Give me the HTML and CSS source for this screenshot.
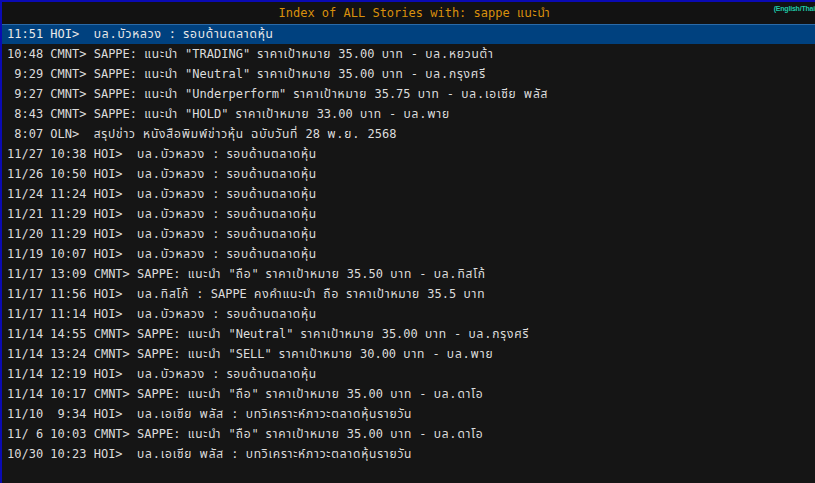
FILE: index.html
```html
<!DOCTYPE html>
<html lang="th">
<head>
<meta charset="utf-8">
<title>Index of ALL Stories</title>
<link rel="stylesheet" href="styles.css">
</head>
<body>
<div class="screen">
  <header class="titlebar">
    <h1 class="title">Index of ALL Stories with: sappe <span class="th">แนะนำ</span></h1>
    <span class="lang">(English/Thai</span>
  </header>
  <ul class="stories">
    <li class="row selected">11:51 HOI>  <span class="th">บล.บัวหลวง</span> : <span class="th">รอบด้านตลาดหุ้น</span></li>
    <li class="row">10:48 CMNT> SAPPE: <span class="th">แนะนำ</span> "TRADING" <span class="th">ราคาเป้าหมาย</span> 35.00 <span class="th">บาท</span> - <span class="th">บล.หยวนต้า</span></li>
    <li class="row"> 9:29 CMNT> SAPPE: <span class="th">แนะนำ</span> "Neutral" <span class="th">ราคาเป้าหมาย</span> 35.00 <span class="th">บาท</span> - <span class="th">บล.กรุงศรี</span></li>
    <li class="row"> 9:27 CMNT> SAPPE: <span class="th">แนะนำ</span> "Underperform" <span class="th">ราคาเป้าหมาย</span> 35.75 <span class="th">บาท</span> - <span class="th">บล.เอเซีย</span> <span class="th">พลัส</span></li>
    <li class="row"> 8:43 CMNT> SAPPE: <span class="th">แนะนำ</span> "HOLD" <span class="th">ราคาเป้าหมาย</span> 33.00 <span class="th">บาท</span> - <span class="th">บล.พาย</span></li>
    <li class="row"> 8:07 OLN>  <span class="th">สรุปข่าว</span> <span class="th">หนังสือพิมพ์ข่าวหุ้น</span> <span class="th">ฉบับวันที่</span> 28 <span class="th">พ.ย.</span> 2568</li>
    <li class="row">11/27 10:38 HOI>  <span class="th">บล.บัวหลวง</span> : <span class="th">รอบด้านตลาดหุ้น</span></li>
    <li class="row">11/26 10:50 HOI>  <span class="th">บล.บัวหลวง</span> : <span class="th">รอบด้านตลาดหุ้น</span></li>
    <li class="row">11/24 11:24 HOI>  <span class="th">บล.บัวหลวง</span> : <span class="th">รอบด้านตลาดหุ้น</span></li>
    <li class="row">11/21 11:29 HOI>  <span class="th">บล.บัวหลวง</span> : <span class="th">รอบด้านตลาดหุ้น</span></li>
    <li class="row">11/20 11:29 HOI>  <span class="th">บล.บัวหลวง</span> : <span class="th">รอบด้านตลาดหุ้น</span></li>
    <li class="row">11/19 10:07 HOI>  <span class="th">บล.บัวหลวง</span> : <span class="th">รอบด้านตลาดหุ้น</span></li>
    <li class="row">11/17 13:09 CMNT> SAPPE: <span class="th">แนะนำ</span> "<span class="th">ถือ</span>" <span class="th">ราคาเป้าหมาย</span> 35.50 <span class="th">บาท</span> - <span class="th">บล.ทิสโก้</span></li>
    <li class="row">11/17 11:56 HOI>  <span class="th">บล.ทิสโก้</span> : SAPPE <span class="th">คงคำแนะนำ</span> <span class="th">ถือ</span> <span class="th">ราคาเป้าหมาย</span> 35.5 <span class="th">บาท</span></li>
    <li class="row">11/17 11:14 HOI>  <span class="th">บล.บัวหลวง</span> : <span class="th">รอบด้านตลาดหุ้น</span></li>
    <li class="row">11/14 14:55 CMNT> SAPPE: <span class="th">แนะนำ</span> "Neutral" <span class="th">ราคาเป้าหมาย</span> 35.00 <span class="th">บาท</span> - <span class="th">บล.กรุงศรี</span></li>
    <li class="row">11/14 13:24 CMNT> SAPPE: <span class="th">แนะนำ</span> "SELL" <span class="th">ราคาเป้าหมาย</span> 30.00 <span class="th">บาท</span> - <span class="th">บล.พาย</span></li>
    <li class="row">11/14 12:19 HOI>  <span class="th">บล.บัวหลวง</span> : <span class="th">รอบด้านตลาดหุ้น</span></li>
    <li class="row">11/14 10:17 CMNT> SAPPE: <span class="th">แนะนำ</span> "<span class="th">ถือ</span>" <span class="th">ราคาเป้าหมาย</span> 35.00 <span class="th">บาท</span> - <span class="th">บล.ดาโอ</span></li>
    <li class="row">11/10  9:34 HOI>  <span class="th">บล.เอเซีย</span> <span class="th">พลัส</span> : <span class="th">บทวิเคราะห์ภาวะตลาดหุ้นรายวัน</span></li>
    <li class="row">11/ 6 10:03 CMNT> SAPPE: <span class="th">แนะนำ</span> "<span class="th">ถือ</span>" <span class="th">ราคาเป้าหมาย</span> 35.00 <span class="th">บาท</span> - <span class="th">บล.ดาโอ</span></li>
    <li class="row">10/30 10:23 HOI>  <span class="th">บล.เอเซีย</span> <span class="th">พลัส</span> : <span class="th">บทวิเคราะห์ภาวะตลาดหุ้นรายวัน</span></li>
  </ul>
</div>
</body>
</html>
```
FILE: styles.css
```css
html, body {
  margin: 0;
  padding: 0;
  background: #151515;
  height: 100%;
  overflow: hidden;
}
.screen {
  height: 100%;
  box-sizing: border-box;
  border-top: 2px solid #0a0ab4;
  border-left: 2px solid #0a0ab4;
  background: #151515;
  font-family: "DejaVu Sans Mono", "Liberation Mono", "Noto Sans Thai", monospace;
  font-size: 12px;
  color: #dcdcdc;
}
.th {
  letter-spacing: 0.8px;
}
.titlebar {
  position: relative;
  height: 22px;
  display: flex;
  justify-content: center;
  align-items: center;
  background: #121212;
}
.title {
  margin: 0;
  padding-left: 12px;
  font: inherit;
  color: #d9900c;
  white-space: pre;
}
.lang {
  position: absolute;
  top: 3px;
  right: 0;
  font-family: "Liberation Sans", sans-serif;
  font-size: 7px;
  font-weight: bold;
  letter-spacing: -0.2px;
  color: #1fc9a8;
  white-space: nowrap;
}
.stories {
  list-style: none;
  margin: 0;
  padding: 0;
}
.row {
  height: 20px;
  line-height: 20px;
  padding-left: 5px;
  white-space: pre;
}
.row.selected {
  background: #00417f;
  box-shadow: inset 0 1px 0 #2a6aa8;
  color: #e8e8e8;
}
```
